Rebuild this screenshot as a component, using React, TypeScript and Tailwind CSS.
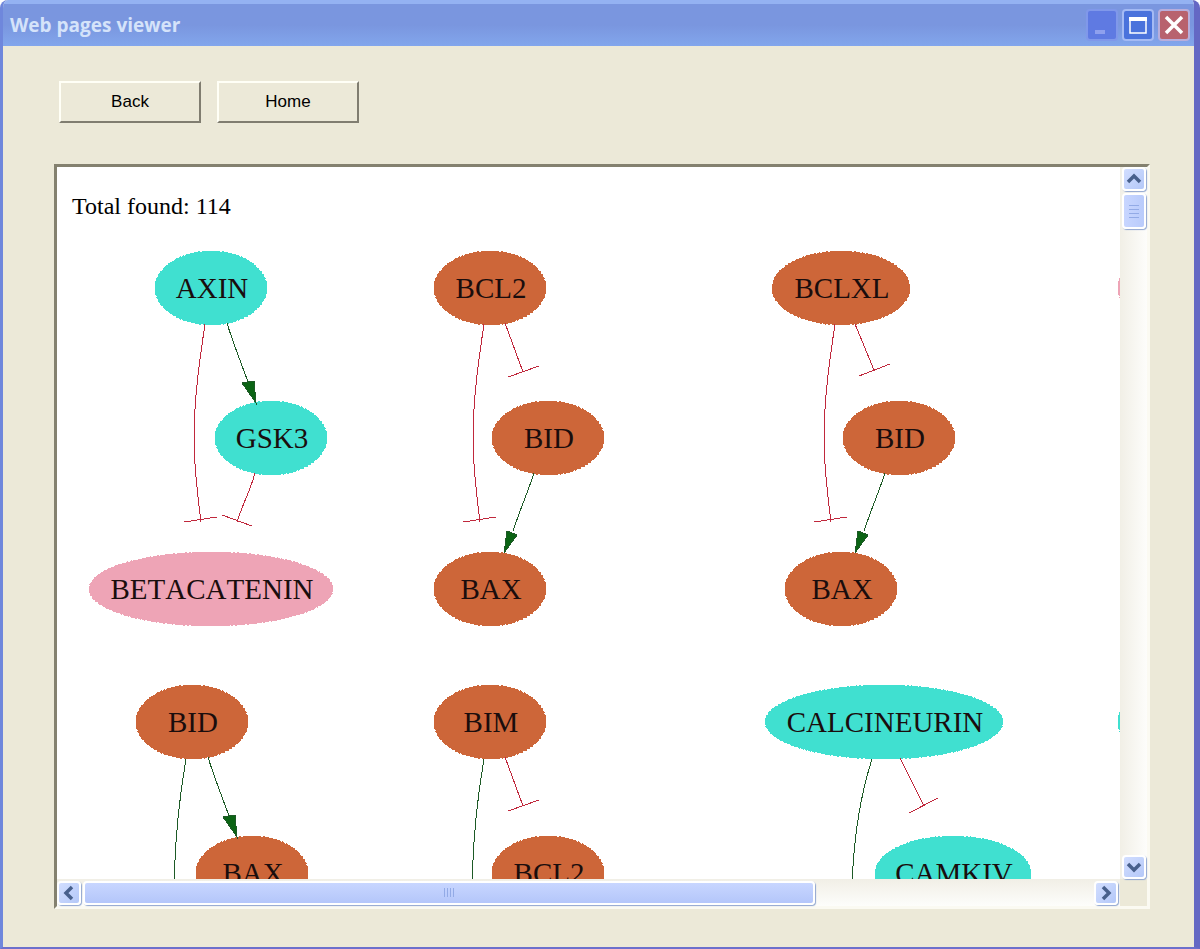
import type { ReactNode } from 'react';
import clsx from 'clsx';

type NodeColor = 'turquoise' | 'orange' | 'pink';
type EdgeKind = 'activates' | 'inhibits';

interface GraphNode {
  label?: string;
  x: number;
  y: number;
  rx?: number;
  color: NodeColor;
}

interface GraphEdge {
  kind: EdgeKind;
  line: string;
  // bar for inhibition, filled head for activation
  tip?: string;
}

interface Cluster {
  id: string;
  x: number;
  y: number;
  nodes: GraphNode[];
  edges: GraphEdge[];
}

const NODE_FILL: Record<NodeColor, string> = {
  turquoise: 'fill-[#40e0d0] stroke-[#40e0d0]',
  orange: 'fill-[#cd6639] stroke-[#cd6639]',
  pink: 'fill-[#eea4b6] stroke-[#eea4b6]',
};

// All edges are relative to the centre of the top node of a cluster
const longInhibit: GraphEdge = {
  kind: 'inhibits',
  line: 'M-6 36 C-11 70 -17 110 -17 150 C-17 180 -13 210 -10 234',
  tip: 'M-27 234 L6 229',
};
const shortInhibit: GraphEdge = { kind: 'inhibits', line: 'M15 35 L33 84', tip: 'M18 89 L49 78' };
const activateRight: GraphEdge = {
  kind: 'activates',
  line: 'M16 35 C20 49 29 72 37 94',
  tip: 'M31 95 L43 93 L45 115 Z',
};
const activateBack: GraphEdge = {
  kind: 'activates',
  line: 'M44 185 C39 201 31 219 23 243',
  tip: 'M17 243 L27 247 L14 265 Z',
};
const activateDown: GraphEdge = { kind: 'activates', line: 'M-6 37 C-10 60 -17 110 -18 165' };

const CLUSTERS: Cluster[] = [
  {
    id: 'axin',
    x: 154,
    y: 68,
    nodes: [
      { label: 'AXIN', x: 0, y: 0, color: 'turquoise' },
      { label: 'GSK3', x: 60, y: 150, color: 'turquoise' },
      { label: 'BETACATENIN', x: 0, y: 301, rx: 122, color: 'pink' },
    ],
    edges: [
      longInhibit,
      activateRight,
      { kind: 'inhibits', line: 'M44 185 C39 204 33 212 26 234', tip: 'M11 227 L41 238' },
    ],
  },
  {
    id: 'bcl2',
    x: 433,
    y: 68,
    nodes: [
      { label: 'BCL2', x: 0, y: 0, color: 'orange' },
      { label: 'BID', x: 58, y: 150, color: 'orange' },
      { label: 'BAX', x: 0, y: 301, color: 'orange' },
    ],
    edges: [longInhibit, shortInhibit, activateBack],
  },
  {
    id: 'bclxl',
    x: 784,
    y: 68,
    nodes: [
      { label: 'BCLXL', x: 0, y: 0, rx: 69, color: 'orange' },
      { label: 'BID', x: 58, y: 150, color: 'orange' },
      { label: 'BAX', x: 0, y: 301, color: 'orange' },
    ],
    edges: [
      longInhibit,
      { kind: 'inhibits', line: 'M14 36 L33 82', tip: 'M18 88 L49 76' },
      activateBack,
    ],
  },
  {
    id: 'top-right',
    x: 1117,
    y: 68,
    nodes: [{ x: 0, y: 0, color: 'pink' }],
    edges: [],
  },
  {
    id: 'bid',
    x: 135,
    y: 502,
    nodes: [
      { label: 'BID', x: 0, y: 0, color: 'orange' },
      { label: 'BAX', x: 60, y: 151, color: 'orange' },
    ],
    edges: [activateDown, activateRight],
  },
  {
    id: 'bim',
    x: 433,
    y: 502,
    nodes: [
      { label: 'BIM', x: 0, y: 0, color: 'orange' },
      { label: 'BCL2', x: 58, y: 151, color: 'orange' },
    ],
    edges: [activateDown, shortInhibit],
  },
  {
    id: 'calcineurin',
    x: 827,
    y: 502,
    nodes: [
      { label: 'CALCINEURIN', x: 0, y: 0, rx: 119, color: 'turquoise' },
      { label: 'CAMKIV', x: 69, y: 151, rx: 78, color: 'turquoise' },
    ],
    edges: [
      { kind: 'activates', line: 'M-12 37 C-20 62 -30 100 -32 165' },
      { kind: 'inhibits', line: 'M16 36 L40 84', tip: 'M25 91 L54 76' },
    ],
  },
  {
    id: 'bottom-right',
    x: 1117,
    y: 502,
    nodes: [{ x: 0, y: 0, color: 'turquoise' }],
    edges: [],
  },
];

function ClusterGraph({ cluster }: { cluster: Cluster }) {
  return (
    <g transform={`translate(${cluster.x} ${cluster.y})`}>
      {cluster.nodes.map((node, index) => (
        <g key={index}>
          <ellipse
            cx={node.x}
            cy={node.y}
            rx={node.rx ?? 56}
            ry={37}
            strokeDasharray="2 2"
            shapeRendering="crispEdges"
            className={NODE_FILL[node.color]}
          />
          {node.label && (
            <text
              x={node.x + 1}
              y={node.y + 10}
              textAnchor="middle"
              className="fill-[#1a0d0d] text-[29px] [font-kerning:none]"
            >
              {node.label}
            </text>
          )}
        </g>
      ))}
      {cluster.edges.map((edge, index) => (
        <g
          key={index}
          shapeRendering="crispEdges"
          className={edge.kind === 'activates' ? 'stroke-[#1d5a26]' : 'stroke-[#c0283c]'}
        >
          <path d={edge.line} fill="none" />
          {edge.tip && (
            <path d={edge.tip} className={edge.kind === 'activates' ? 'fill-[#0b6414]' : 'fill-none'} />
          )}
        </g>
      ))}
    </g>
  );
}

function TitleButton({ label, className, children }: { label: string; className: string; children: ReactNode }) {
  return (
    <button
      type="button"
      aria-label={label}
      className={clsx('flex h-8 w-8 items-center justify-center rounded border-2', className)}
    >
      <svg viewBox="0 0 30 30" className="h-[30px] w-[30px] shrink-0" fill="none">
        {children}
      </svg>
    </button>
  );
}

function ToolbarButton({ children }: { children: ReactNode }) {
  return (
    <button
      type="button"
      className="h-[42px] w-[142px] border-2 border-t-[#fffff6] border-r-[#807d70] border-b-[#807d70] border-l-[#fffff6] bg-[#ece9d8] text-[17px] text-black"
    >
      {children}
    </button>
  );
}

const ARROWS = {
  up: 'M5 14 L11 8 L17 14',
  down: 'M5 8 L11 14 L17 8',
  left: 'M14 5 L8 11 L14 17',
  right: 'M8 5 L14 11 L8 17',
};

function ScrollButton({ direction }: { direction: keyof typeof ARROWS }) {
  return (
    <button
      type="button"
      aria-label={`Scroll ${direction}`}
      className="flex h-6 w-6 shrink-0 items-center justify-center rounded-sm border-2 border-white bg-linear-to-br from-[#d2deff] to-[#b4c8f8] shadow-[1px_1px_1px_#8fa5cf]"
    >
      <svg viewBox="0 0 22 22" className="h-[22px] w-[22px] shrink-0" fill="none">
        <path d={ARROWS[direction]} className="stroke-[#48608c]" strokeWidth={3.5} />
      </svg>
    </button>
  );
}

export default function App() {
  return (
    <div className="flex h-screen flex-col overflow-hidden rounded-t-lg border-r-[6px] border-b-2 border-l-[3px] border-r-[#6468c4] border-b-[#6c70cc] border-l-[#6f87dc] bg-[#ece9d8] font-['Liberation_Sans',Arial,sans-serif]">
      <header className="-mr-[6px] -ml-[3px] flex h-[46px] shrink-0 items-center justify-between border-t-4 border-t-[#94b2f2] bg-linear-to-b from-[#7a96df] via-[#7a96df] to-[#82a6ec] pr-[10px] pl-[10px]">
        <h1 className="pt-px font-['Open_Sans','Trebuchet_MS',sans-serif] text-[19px] font-bold text-[#d5e3fa]">
          Web pages viewer
        </h1>
        <div className="flex gap-1">
          <TitleButton label="Minimize" className="border-[#8098ea] bg-[#5f7ae2]">
            <path d="M8 22 H18" className="stroke-[#8fa0ee]" strokeWidth={4} />
          </TitleButton>
          <TitleButton label="Maximize" className="border-[#a4baf4] bg-[#4a72dc]">
            <path d="M7 8 H23 V23 H7 Z" className="stroke-white" strokeWidth={1.5} />
            <path d="M6 9 H24" className="stroke-white" strokeWidth={4} />
          </TitleButton>
          <TitleButton label="Close" className="border-[#b8aedc] bg-[#b8626e]">
            <path d="M7 7 L23 23 M23 7 L7 23" className="stroke-white" strokeWidth={3.5} />
          </TitleButton>
        </div>
      </header>

      <nav className="flex gap-4 px-14 pt-[35px] pb-[41px]">
        <ToolbarButton>Back</ToolbarButton>
        <ToolbarButton>Home</ToolbarButton>
      </nav>

      <main className="mr-11 mb-[38px] ml-[51px] flex min-h-0 flex-1 flex-col border-[3px] border-t-[#84816f] border-r-[#fbfaf2] border-b-[#fbfaf2] border-l-[#84816f] bg-[#ece9d8]">
        <div className="flex min-h-0 flex-1">
          <section className="min-w-0 flex-1 overflow-hidden bg-white font-['Liberation_Serif','Times_New_Roman',serif]">
            <p className="px-[15px] pt-[25px] text-2xl leading-7 text-black">Total found: 114</p>
            <svg width={1400} height={900} className="max-w-none">
              {CLUSTERS.map((cluster) => (
                <ClusterGraph key={cluster.id} cluster={cluster} />
              ))}
            </svg>
          </section>
          <div className="flex w-[27px] shrink-0 flex-col items-center bg-linear-to-r from-[#f1efe6] to-[#fdfdfb]">
            <ScrollButton direction="up" />
            <div className="mt-[2px] flex h-9 w-6 flex-col items-center justify-center gap-[3px] rounded-sm border-2 border-white bg-linear-to-r from-[#c8d6ff] to-[#b9cbfb] shadow-[1px_1px_1px_#8fa5cf]">
              <span className="h-px w-[10px] bg-[#92aae6]" />
              <span className="h-px w-[10px] bg-[#92aae6]" />
              <span className="h-px w-[10px] bg-[#92aae6]" />
              <span className="h-px w-[10px] bg-[#92aae6]" />
            </div>
            <div className="flex-1" />
            <ScrollButton direction="down" />
          </div>
        </div>
        <div className="flex h-[27px] shrink-0">
          <div className="flex min-w-0 flex-1 items-center bg-linear-to-b from-[#f1efe6] to-[#fdfdfb] pr-[2px]">
            <ScrollButton direction="left" />
            <div className="mx-[2px] flex min-w-0 flex-1">
              <div className="flex h-6 w-[72.5%] items-center justify-center gap-[2px] rounded-sm border-2 border-white bg-linear-to-b from-[#c8d6ff] to-[#b4c6fa] shadow-[1px_1px_1px_#8fa5cf]">
                <span className="h-[9px] w-px bg-[#92aae6]" />
                <span className="h-[9px] w-px bg-[#92aae6]" />
                <span className="h-[9px] w-px bg-[#92aae6]" />
                <span className="h-[9px] w-px bg-[#92aae6]" />
              </div>
            </div>
            <ScrollButton direction="right" />
          </div>
          <div className="w-[27px] shrink-0" />
        </div>
      </main>
    </div>
  );
}
